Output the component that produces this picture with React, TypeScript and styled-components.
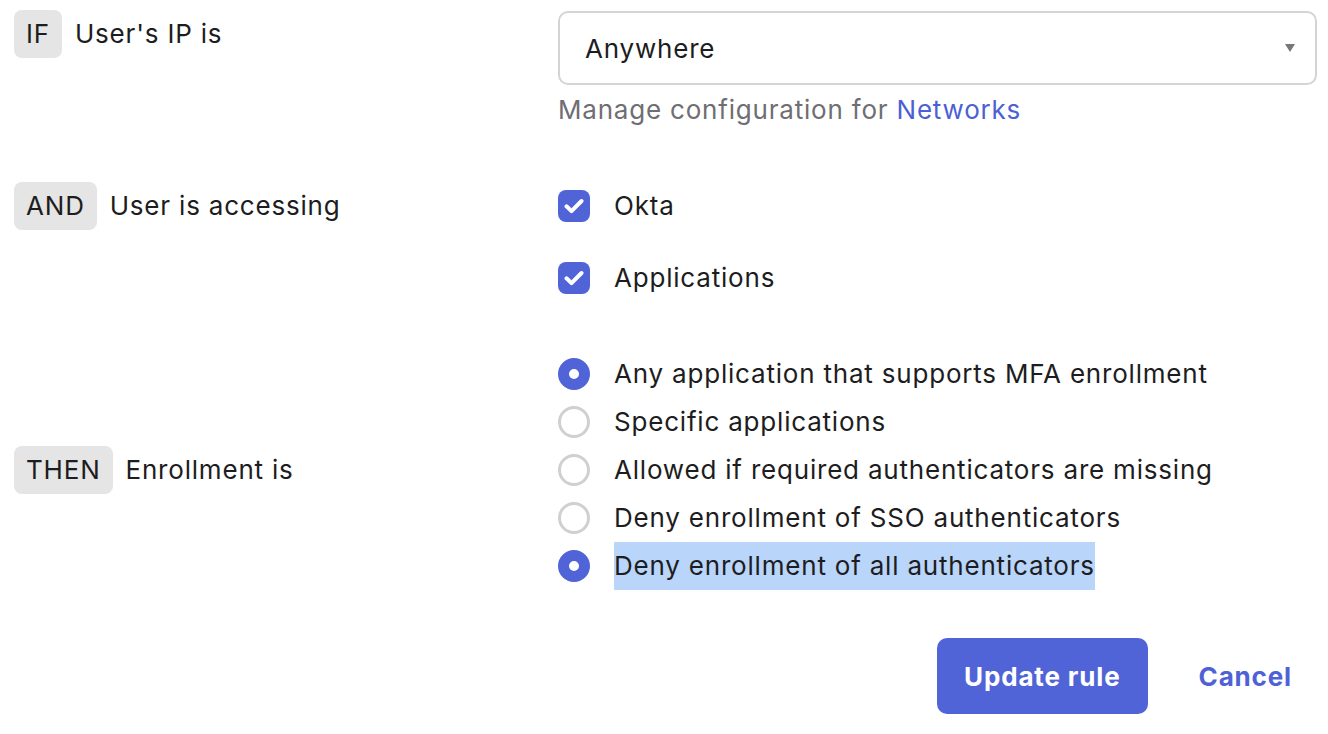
import React from "react";
import styled, { createGlobalStyle } from "styled-components";

const Global = createGlobalStyle`
  html, body { margin: 0; padding: 0; background: #ffffff; }
  body { font-family: Inter, "Noto Sans", sans-serif; color: #1d1d21; letter-spacing: 0.8px; -webkit-font-smoothing: antialiased; }
`;

const Page = styled.div`
  padding: 10px 11px 0 14px;
  display: flex;
  flex-direction: column;
`;

const Section = styled.div<{ $top?: number; $center?: boolean }>`
  display: grid;
  grid-template-columns: 544px 1fr;
  align-items: ${(p) => (p.$center ? "center" : "start")};
  margin-top: ${(p) => p.$top ?? 0}px;
`;

const Condition = styled.div`
  display: flex;
  align-items: center;
  gap: 13px;
  font-size: 26px;
  line-height: 48px;
`;

const Badge = styled.span`
  display: inline-flex;
  align-items: center;
  justify-content: center;
  height: 48px;
  padding: 0 12px;
  border-radius: 8px;
  background: #e5e5e5;
  color: #1d1d21;
  font-size: 26px;
`;

const Column = styled.div<{ $gap?: number }>`
  display: flex;
  flex-direction: column;
  gap: ${(p) => p.$gap ?? 0}px;
`;

const Select = styled.div`
  margin-top: 1px;
  height: 74px;
  box-sizing: border-box;
  border: 2px solid #d4d4d6;
  border-radius: 10px;
  display: flex;
  align-items: center;
  justify-content: space-between;
  padding: 0 20px 0 25px;
  font-size: 26px;
`;

const Caret = styled.span`
  width: 0;
  height: 0;
  border-left: 5.5px solid transparent;
  border-right: 5.5px solid transparent;
  border-top: 8px solid #777;
`;

const Helper = styled.div`
  margin-top: 7px;
  font-size: 26px;
  line-height: 36px;
  color: #6e6e73;
`;

const Link = styled.a`
  color: #4c5fd5;
  text-decoration: none;
`;

const Option = styled.label`
  display: flex;
  align-items: center;
  gap: 24px;
  height: 48px;
  font-size: 26px;
  line-height: 48px;
`;

const CheckBox = styled.span`
  width: 32px;
  height: 32px;
  border-radius: 8px;
  background: #5064d8;
  display: inline-flex;
  align-items: center;
  justify-content: center;
  flex: none;
`;

const Radio = styled.span<{ $on?: boolean }>`
  width: 32px;
  height: 32px;
  box-sizing: border-box;
  border-radius: 50%;
  flex: none;
  background: #ffffff;
  border: ${(p) => (p.$on ? "11px solid #5064d8" : "3px solid #d0d0d2")};
`;

const Highlight = styled.span`
  background: #b9d5fa;
`;

const Actions = styled.div`
  margin-top: 48px;
  display: flex;
  justify-content: flex-end;
  align-items: center;
  gap: 26px;
`;

const Primary = styled.button`
  height: 76px;
  padding: 0 27px;
  border: none;
  border-radius: 10px;
  background: #5064d8;
  color: #ffffff;
  font-family: Inter, "Noto Sans", sans-serif;
  font-weight: 700;
  font-size: 26px;
  letter-spacing: 0.85px;
`;

const TextButton = styled.button`
  height: 76px;
  padding: 0 25px;
  border: none;
  background: transparent;
  color: #4e62d6;
  font-family: Inter, "Noto Sans", sans-serif;
  font-weight: 700;
  font-size: 26px;
  letter-spacing: 0.85px;
`;

const Check = () => (
  <svg width="20" height="16" viewBox="0 0 20 16" fill="none">
    <path d="M2.5 8.3l5 4.8L17.5 3" stroke="#fff" strokeWidth="4" strokeLinecap="round" strokeLinejoin="round" />
  </svg>
);

const radios = [
  { label: "Any application that supports MFA enrollment", on: true },
  { label: "Specific applications", on: false },
  { label: "Allowed if required authenticators are missing", on: false },
  { label: "Deny enrollment of SSO authenticators", on: false },
  { label: "Deny enrollment of all authenticators", on: true, hl: true },
];

export default function App() {
  return (
    <>
      <Global />
      <Page>
        <Section>
          <Condition>
            <Badge>IF</Badge>
            <span>User's IP is</span>
          </Condition>
          <Column>
            <Select>
              <span>Anywhere</span>
              <Caret />
            </Select>
            <Helper>
              Manage configuration for <Link>Networks</Link>
            </Helper>
          </Column>
        </Section>

        <Section $top={54}>
          <Condition>
            <Badge>AND</Badge>
            <span>User is accessing</span>
          </Condition>
          <Column $gap={24}>
            <Option>
              <CheckBox><Check /></CheckBox>
              <span>Okta</span>
            </Option>
            <Option>
              <CheckBox><Check /></CheckBox>
              <span>Applications</span>
            </Option>
          </Column>
        </Section>

        <Section $top={48} $center>
          <Condition>
            <Badge>THEN</Badge>
            <span>Enrollment is</span>
          </Condition>
          <Column>
            {radios.map((r) => (
              <Option key={r.label}>
                <Radio $on={r.on} />
                {r.hl ? <Highlight>{r.label}</Highlight> : <span>{r.label}</span>}
              </Option>
            ))}
          </Column>
        </Section>

        <Actions>
          <Primary>Update rule</Primary>
          <TextButton>Cancel</TextButton>
        </Actions>
      </Page>
    </>
  );
}
